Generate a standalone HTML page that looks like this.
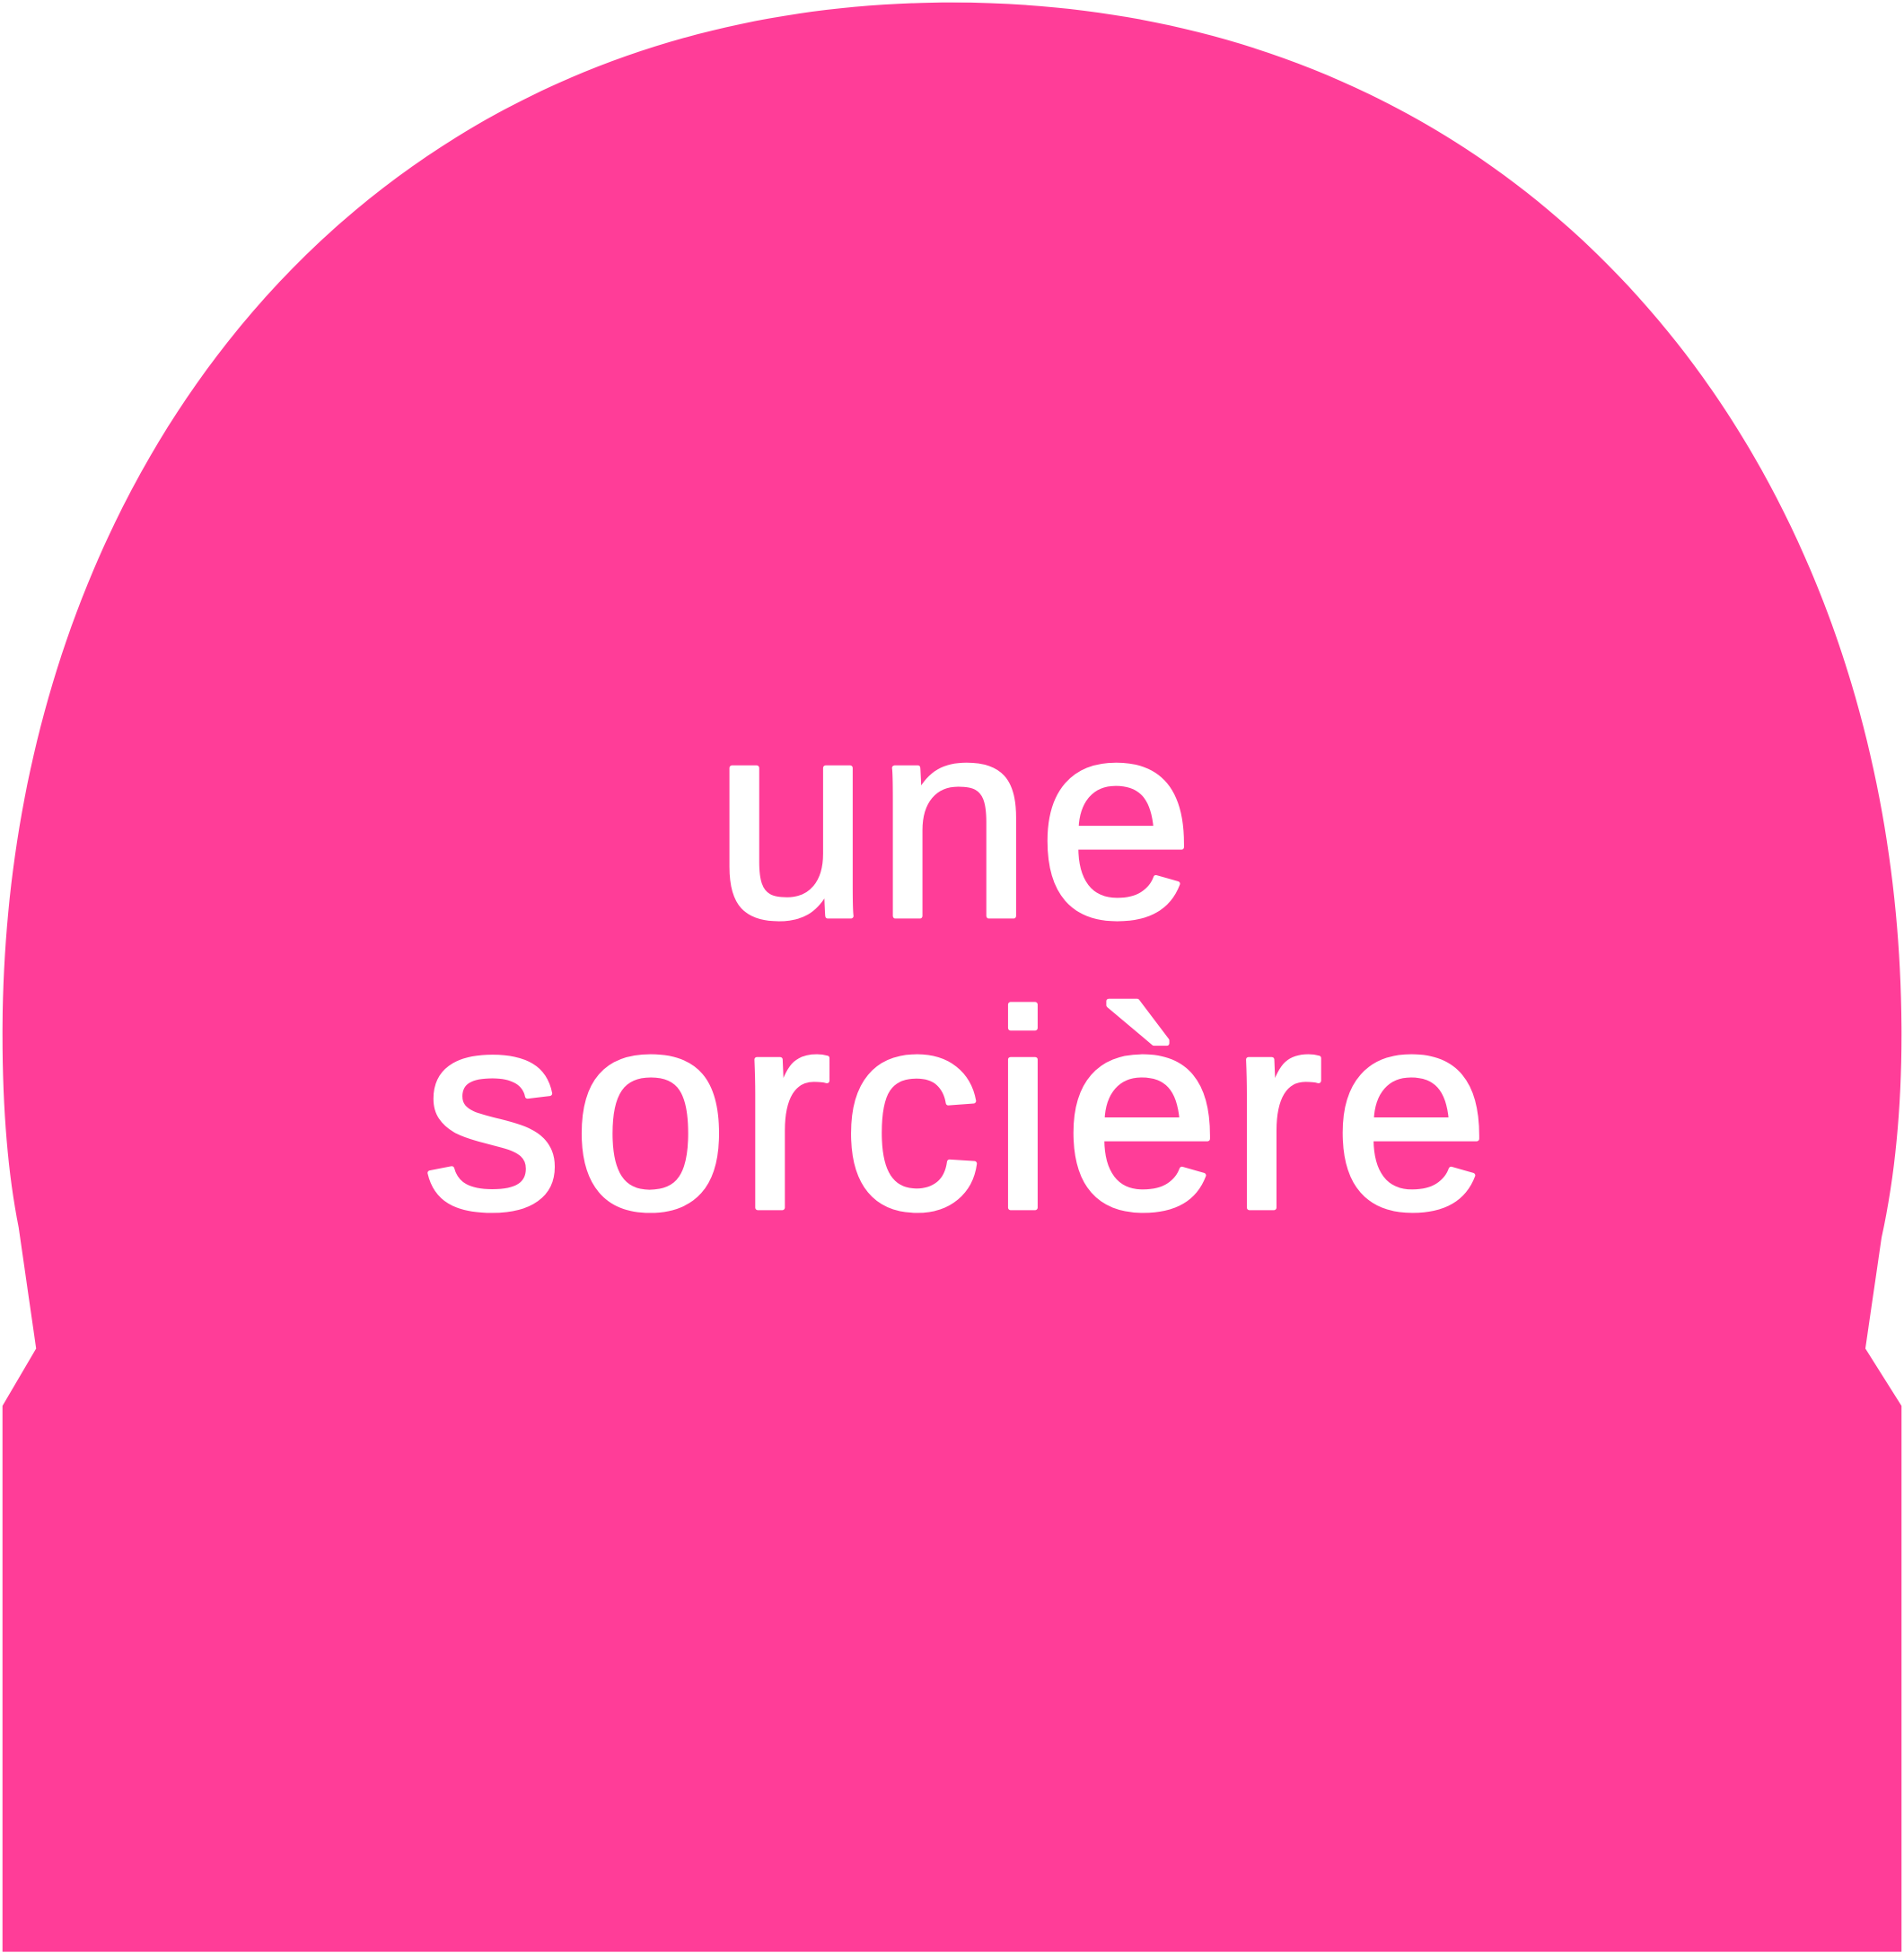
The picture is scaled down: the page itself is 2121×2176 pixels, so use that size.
<!DOCTYPE html>
<html><head><meta charset="utf-8"><style>html,body{margin:0;padding:0;background:#fff;width:2121px;height:2176px;overflow:hidden}svg{display:block}</style></head>
<body>
<svg width="2121" height="2176" viewBox="0 0 1528 1567" preserveAspectRatio="none" xmlns="http://www.w3.org/2000/svg">
<path fill="#FF3D98" d="M2,830 C2,380 290,2 764,2 C1238,2 1526,380 1526,830 Q1526,920 1510,993 L1497,1082 L1526,1128 L1526,1566 L2,1566 L2,1128 L29,1082 L15,985 Q2,920 2,830 Z"/>
<g fill="#fff" stroke="#fff" stroke-width="4" stroke-linejoin="round" font-family="'Liberation Sans', Arial, sans-serif" font-size="225" text-anchor="middle">
<text x="768" y="735" letter-spacing="5">une</text>
<text x="771" y="969" letter-spacing="8">sorcière</text>
</g>
</svg>
</body></html>
